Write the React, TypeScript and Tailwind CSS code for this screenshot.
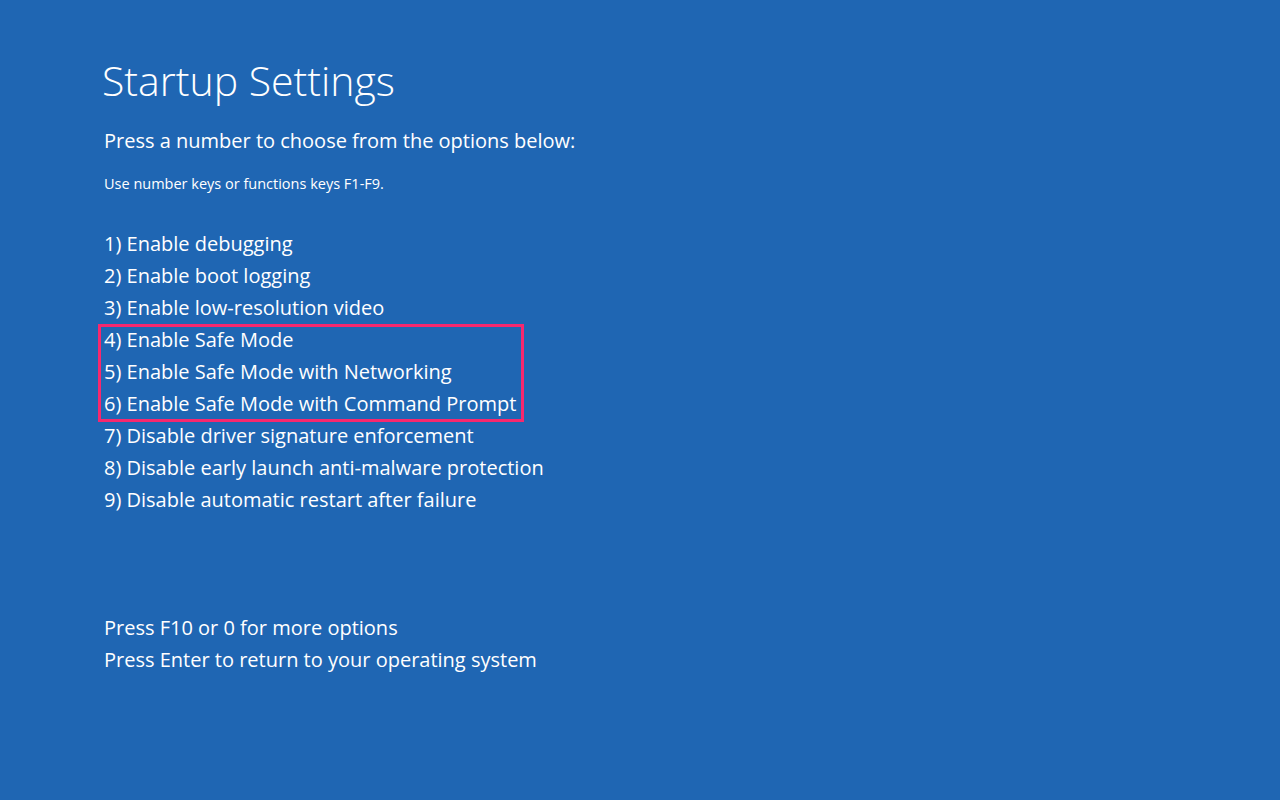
export default function App() {
  const options = [
    "1) Enable debugging",
    "2) Enable boot logging",
    "3) Enable low-resolution video",
  ];
  const safe = [
    "4) Enable Safe Mode",
    "5) Enable Safe Mode with Networking",
    "6) Enable Safe Mode with Command Prompt",
  ];
  const rest = [
    "7) Disable driver signature enforcement",
    "8) Disable early launch anti-malware protection",
    "9) Disable automatic restart after failure",
  ];

  return (
    <div
      className="w-[1280px] h-[800px] bg-[#1f66b3] text-white overflow-hidden flex flex-col pl-[104px]"
      style={{ fontFamily: '"Open Sans", "Noto Sans", sans-serif' }}
    >
      <h1 className="mt-[52px] -ml-[2px] text-[41px] font-light leading-[56px]">Startup Settings</h1>
      <p className="mt-[19px] text-[20px] leading-[28px]">Press a number to choose from the options below:</p>
      <p className="mt-[19px] text-[14.5px] leading-[20px]">Use number keys or functions keys F1-F9.</p>

      <div className="mt-[34px] flex flex-col text-[20px] leading-[32px]">
        {options.map((o) => (
          <div key={o}>{o}</div>
        ))}
        <div className="relative">
          {safe.map((o) => (
            <div key={o}>{o}</div>
          ))}
          {/* highlight frame */}
          <div className="absolute -left-[6px] top-0 -bottom-[2px] w-[426px] border-[3px] border-[#f7286e] pointer-events-none" />
        </div>
        {rest.map((o) => (
          <div key={o}>{o}</div>
        ))}
      </div>

      <div className="mt-[96px] flex flex-col text-[20px] leading-[32px]">
        <div>Press F10 or 0 for more options</div>
        <div>Press Enter to return to your operating system</div>
      </div>
    </div>
  );
}
